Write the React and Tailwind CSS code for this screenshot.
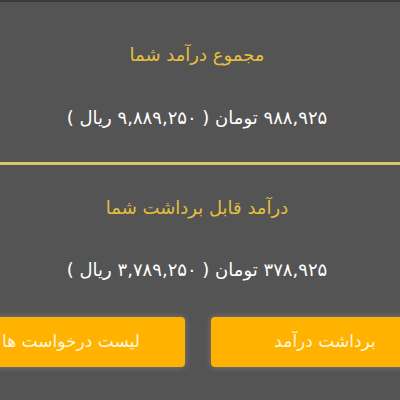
import React from 'react';

const Amount = ({ toman, rial }) => (
  <p className="text-[18px] leading-6 text-white text-center pr-[6px]">
    {toman} تومان ( {rial} ریال )
  </p>
);

const App = () => {
  return (
    <div
      dir="rtl"
      className="w-[400px] h-[400px] overflow-hidden bg-[#545454] border-t-2 border-[#3a3a3a]"
      style={{ fontFamily: '"DejaVu Sans", "Noto Sans", sans-serif' }}
    >
      <div className="pt-[41px] pb-[32px] border-b-[3px] border-[#dcc566]">
        <h2 className="text-[18px] leading-6 text-[#e3c03f] text-center pr-[6px] mb-[39px]">مجموع درآمد شما</h2>
        <Amount toman="۹۸۸,۹۲۵" rial="۹,۸۸۹,۲۵۰" />
      </div>

      <div className="pt-[31px]">
        <h2 className="text-[18px] leading-6 text-[#e3c03f] text-center pr-[6px] mb-[38px]">درآمد قابل برداشت شما</h2>
        <Amount toman="۳۷۸,۹۲۵" rial="۳,۷۸۹,۲۵۰" />

        <div className="mt-[35px] flex justify-center">
          <div className="flex gap-[26px] shrink-0 pr-[4px]">
            <button className="w-[228px] h-[50px] shrink-0 rounded bg-[#ffb300] text-[#fff6de] text-[17px] shadow-[0_0_6px_rgba(255,255,255,0.25)]">
              برداشت درآمد
            </button>
            <button className="w-[228px] h-[50px] shrink-0 rounded bg-[#ffb300] text-[#fff6de] text-[17px] shadow-[0_0_6px_rgba(255,255,255,0.25)]">
              لیست درخواست ها
            </button>
          </div>
        </div>
      </div>
    </div>
  );
};

export default App;
